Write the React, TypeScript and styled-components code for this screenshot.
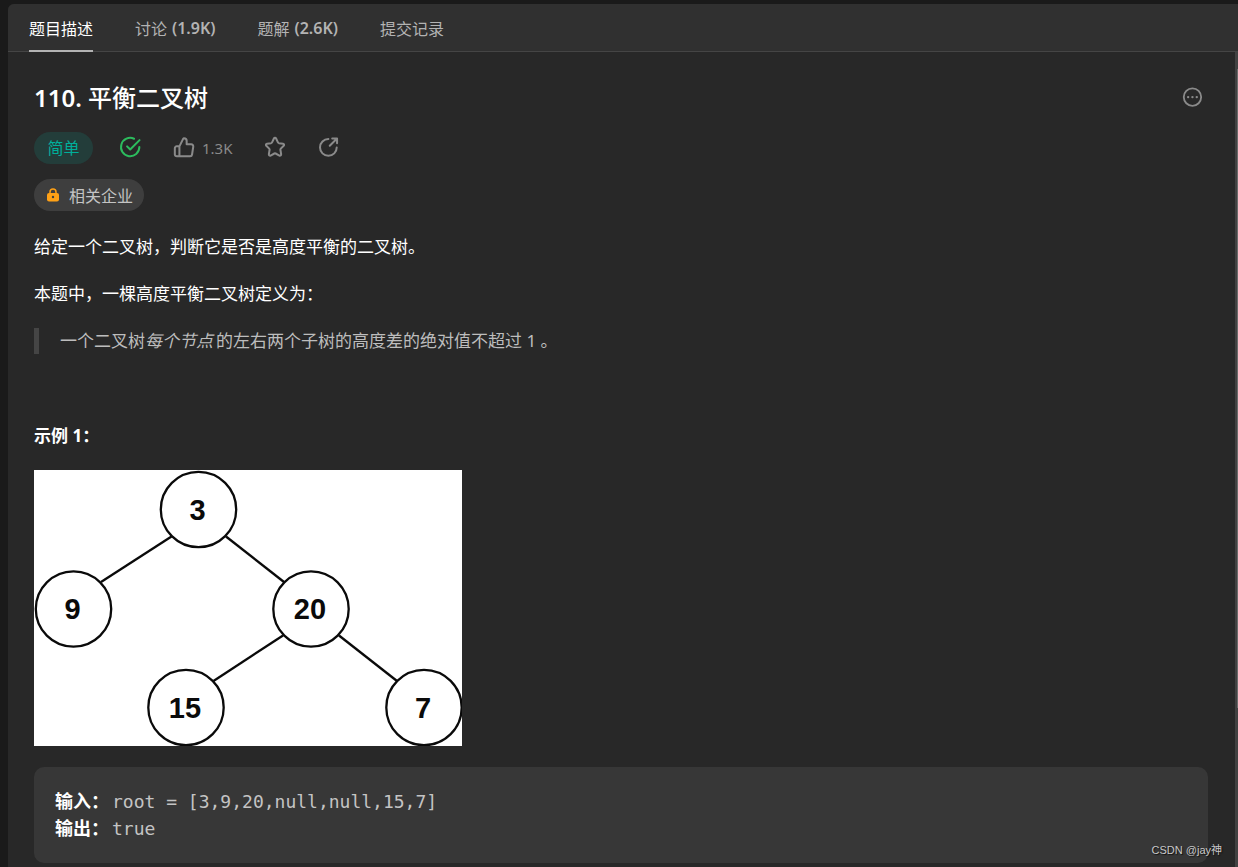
import React from "react";
import styled, { createGlobalStyle } from "styled-components";

const sans = `"Noto Sans", "Noto Sans CJK SC", sans-serif`;
const mono = `"DejaVu Sans Mono", "Noto Sans CJK SC", monospace`;

const GlobalStyle = createGlobalStyle`
  *, *::before, *::after { box-sizing: border-box; }
  body {
    margin: 0;
    background: #1a1a1a;
    color: #fff;
    font-family: ${sans};
    font-size: 16px;
  }
  button {
    margin: 0;
    padding: 0;
    border: 0;
    background: none;
    color: inherit;
    font: inherit;
    cursor: pointer;
  }
`;

const Page = styled.div`
  position: relative;
  display: flex;
  min-height: 100vh;
  padding: 4px 0 0 8px;
`;

const Panel = styled.main`
  flex: 1;
  min-width: 0;
  display: flex;
  flex-direction: column;
  background: #282828;
  border-top-left-radius: 6px;
  overflow: hidden;
`;

const TabBar = styled.nav`
  display: flex;
  gap: 42px;
  height: 48px;
  padding: 0 21px;
  background: #303030;
  border-bottom: 1px solid #454545;
`;

const Tab = styled.button<{ $active?: boolean }>`
  display: flex;
  align-items: center;
  gap: 5px;
  height: 48px;
  border-top: 2px solid transparent;
  border-bottom: 2px solid ${(p) => (p.$active ? "#b3b3b3" : "transparent")};
  color: ${(p) => (p.$active ? "#fff" : "#b3b3b3")};
  white-space: nowrap;
`;

const Count = styled.span`
  font-weight: 600;
`;

const Body = styled.div`
  flex: 1;
  display: flex;
`;

const Content = styled.article`
  flex: 1;
  min-width: 0;
  padding: 30px 27px 4px 26px;
`;

const ScrollTrack = styled.div`
  width: 3px;
  padding: 17px 0 159px 2px;
  display: flex;
  background: #424242;
`;

const ScrollThumb = styled.div`
  flex: 1;
  background: #6b6b6b;
`;

const TitleRow = styled.header`
  display: flex;
  align-items: center;
  justify-content: space-between;
  height: 32px;
  padding-right: 5px;
`;

const Title = styled.h1`
  margin: 0;
  font-size: 24px;
  line-height: 32px;
  font-weight: 500;
`;

const TitleNumber = styled.span`
  font-weight: 600;
`;

const IconButton = styled.button<{ $color?: string }>`
  display: flex;
  align-items: center;
  gap: 7px;
  color: ${(p) => p.$color || "#8a8a8a"};
  font-size: 15px;

  svg {
    overflow: visible;
  }
`;

const MetaRow = styled.div`
  display: flex;
  align-items: center;
  height: 32px;
  gap: 32px;
  margin-top: 18px;
`;

const Difficulty = styled.span`
  min-width: 59px;
  margin-right: -6px;
  border-radius: 16px;
  background: #233d3a;
  color: #00af9b;
  line-height: 32px;
  text-align: center;
`;

const CompanyButton = styled.button`
  display: flex;
  align-items: center;
  gap: 8px;
  height: 32px;
  margin-top: 15px;
  padding: 0 11px;
  border-radius: 16px;
  background: #3e3e3e;
  color: #c4c4c4;
`;

const Prose = styled.div`
  display: flex;
  flex-direction: column;
  gap: 21px;
  margin-top: 23px;
  font-size: 17px;
  line-height: 26px;
`;

const Paragraph = styled.p`
  margin: 0;
`;

const Spacer = styled.div`
  height: 27px;
`;

const Quote = styled.blockquote`
  margin: 0;
  padding-left: 21px;
  border-left: 5px solid #454545;
  color: #bdbdbd;
`;

const Emphasis = styled.em`
  margin-right: 3px;
`;

const TreeFigure = styled.svg`
  display: block;
  width: 428px;
  max-width: 100%;
  height: auto;
  background: #fff;
`;

const Example = styled.pre`
  margin: 0;
  padding: 21px;
  border-radius: 10px;
  background: #373737;
  color: #c4c4c4;
  font-family: ${mono};
  font-size: 18px;
  line-height: 26px;
  white-space: pre-wrap;
`;

const ExampleLabel = styled.strong`
  margin-right: 3px;
  color: #fff;
  font-family: ${sans};
`;

const Watermark = styled.div`
  position: absolute;
  right: 16px;
  bottom: 8px;
  color: #c8c8c8;
  font: 11px/18px "Liberation Sans", "Noto Sans CJK SC", sans-serif;
  text-shadow: 1px 1px 1px #111;
`;

const lineIcon = {
  width: 22,
  height: 22,
  viewBox: "0 1 24 24",
  fill: "none",
  stroke: "currentColor",
  strokeWidth: 2.2,
  strokeLinecap: "round" as const,
  strokeLinejoin: "round" as const,
  "aria-hidden": true,
};

const MoreIcon = () => (
  <svg {...lineIcon}>
    <circle cx="12.5" cy="12" r="9.5" strokeWidth="2" />
    <g fill="currentColor" stroke="none">
      <circle cx="7.8" cy="12" r="1.3" />
      <circle cx="12.5" cy="12" r="1.3" />
      <circle cx="17.2" cy="12" r="1.3" />
    </g>
  </svg>
);

const SolvedIcon = () => (
  <svg {...lineIcon}>
    <path d="M22.2 12A10 10 0 1 1 16.4 2.9" />
    <path d="m8.8 11.2 3.4 3.4L22.4 4.4" />
  </svg>
);

const LikeIcon = () => (
  <svg {...lineIcon}>
    <path d="M7 11.2V22H4a2 2 0 0 1-2-2v-6.8a2 2 0 0 1 2-2h3l4.2-8.4a.9.9 0 0 1 .8-.5 2.900 2.900 0 0 1 2.900 2.900V9h5a2.200 2.200 0 0 1 2.200 2.500l-1.300 8.600A2.200 2.200 0 0 1 18.600 22H7" />
  </svg>
);

const StarIcon = () => (
  <svg {...lineIcon}>
    <path d="M10.8 2.7c.5-1 1.900-1 2.400 0l2 4.200c.2.400.6.700 1 .8l4.600.6c1.100.2 1.500 1.400.7 2.200l-3.200 3.200c-.3.300-.5.800-.4 1.200l.8 4.900c.2 1.100-.9 1.900-1.900 1.400l-4.100-2.200a1.500 1.500 0 0 0-1.400 0l-4.100 2.200c-1 .5-2.100-.3-1.900-1.400l.8-4.900c.1-.4-.1-.9-.4-1.200L2.500 10.500c-.8-.8-.4-2 .7-2.200l4.600-.6c.4-.1.800-.4 1-.8z" />
  </svg>
);

const ShareIcon = () => (
  <svg {...lineIcon}>
    <path d="M11.300 3.300a9.100 9.100 0 1 0 9.100 9.100" />
    <path d="M15.500 2.600h5.300v5.300M20.200 3.200l-7.400 7.400" />
  </svg>
);

const LockIcon = () => (
  <svg width="16" height="16" viewBox="0 0 16 16" aria-hidden="true">
    <path d="M5 7V5a3 3 0 0 1 6 0v2" fill="none" stroke="#ffa116" strokeWidth="1.5" />
    <rect x="2" y="6" width="12" height="8.5" rx="2" fill="#ffa116" />
    <circle cx="8" cy="10" r="1.2" fill="#3e3e3e" />
  </svg>
);

const nodes = [
  { label: "3", x: 164.5, y: 39.5 },
  { label: "9", x: 39.5, y: 139 },
  { label: "20", x: 277, y: 139 },
  { label: "15", x: 152, y: 237.5 },
  { label: "7", x: 390, y: 237.5 },
];

const edges = [
  [137.5, 66.5, 67, 112],
  [192, 66.5, 250, 112],
  [249, 165.5, 179.5, 211],
  [305, 165.5, 363, 211],
];

const Tree = () => (
  <TreeFigure viewBox="0 0 428 276" role="img" aria-label="[3,9,20,null,null,15,7]">
    <g stroke="#0a0a0a" strokeWidth="2.3" fill="none">
      {edges.map(([x1, y1, x2, y2], i) => (
        <line key={i} x1={x1} y1={y1} x2={x2} y2={y2} />
      ))}
      {nodes.map((n) => (
        <circle key={n.label} cx={n.x} cy={n.y} r="37.7" />
      ))}
    </g>
    <g fill="#0a0a0a" fontFamily="Liberation Sans, sans-serif" fontWeight="700" fontSize="29" textAnchor="middle">
      {nodes.map((n) => (
        <text key={n.label} x={n.x - 1} y={n.y + 10}>
          {n.label}
        </text>
      ))}
    </g>
  </TreeFigure>
);

const tabs = [
  { name: "题目描述", active: true },
  { name: "讨论", count: "(1.9K)" },
  { name: "题解", count: "(2.6K)" },
  { name: "提交记录" },
];

export default function App() {
  return (
    <>
      <GlobalStyle />
      <Page>
        <Panel>
          <TabBar>
            {tabs.map((t) => (
              <Tab key={t.name} type="button" $active={t.active} aria-current={t.active ? "page" : undefined}>
                {t.name}
                {t.count && <Count>{t.count}</Count>}
              </Tab>
            ))}
          </TabBar>
          <Body>
            <Content>
              <TitleRow>
                <Title>
                  <TitleNumber>110.</TitleNumber> 平衡二叉树
                </Title>
                <IconButton type="button" aria-label="更多">
                  <MoreIcon />
                </IconButton>
              </TitleRow>
              <MetaRow>
                <Difficulty>简单</Difficulty>
                <IconButton type="button" aria-label="已解答" $color="#2cbb5d">
                  <SolvedIcon />
                </IconButton>
                <IconButton type="button">
                  <LikeIcon />
                  1.3K
                </IconButton>
                <IconButton type="button" aria-label="收藏">
                  <StarIcon />
                </IconButton>
                <IconButton type="button" aria-label="分享">
                  <ShareIcon />
                </IconButton>
              </MetaRow>
              <CompanyButton type="button">
                <LockIcon />
                相关企业
              </CompanyButton>
              <Prose>
                <Paragraph>给定一个二叉树，判断它是否是高度平衡的二叉树。</Paragraph>
                <Paragraph>本题中，一棵高度平衡二叉树定义为：</Paragraph>
                <Quote>
                  一个二叉树<Emphasis>每个节点</Emphasis>的左右两个子树的高度差的绝对值不超过 1 。
                </Quote>
                <Spacer />
                <Paragraph>
                  <strong>示例 1：</strong>
                </Paragraph>
                <Tree />
                <Example>
                  <ExampleLabel>输入：</ExampleLabel>root = [3,9,20,null,null,15,7]{"\n"}
                  <ExampleLabel>输出：</ExampleLabel>true
                </Example>
              </Prose>
            </Content>
            <ScrollTrack>
              <ScrollThumb />
            </ScrollTrack>
          </Body>
        </Panel>
        <Watermark>CSDN @jay神</Watermark>
      </Page>
    </>
  );
}
